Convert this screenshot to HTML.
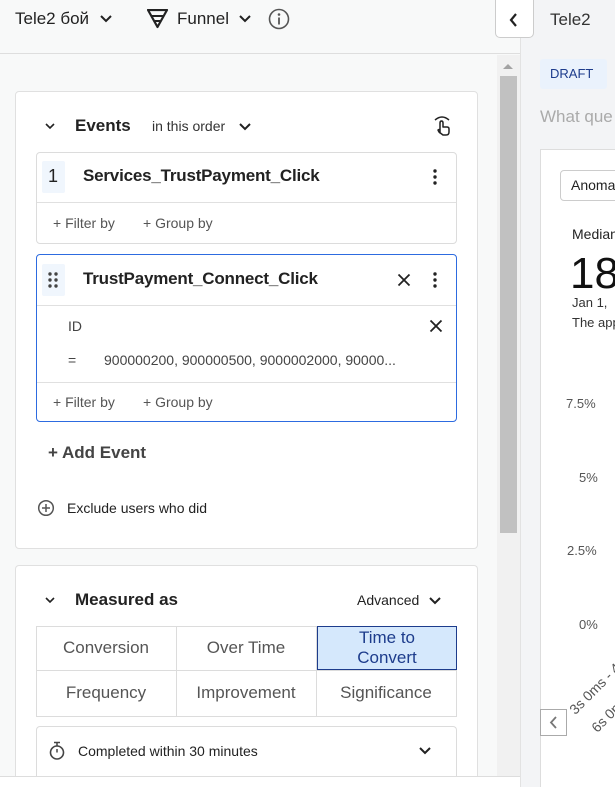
<!DOCTYPE html>
<html style="width:615px;height:787px;overflow:hidden"><head><meta charset="utf-8"><style>
*{box-sizing:border-box;margin:0;padding:0}
body{width:615px;height:787px;overflow:hidden;background:#f8f9f9;font-family:"Liberation Sans","DejaVu Sans",sans-serif;color:#1a1a1a;position:relative}
.a{position:absolute}
.t{position:absolute;white-space:nowrap}
.card{position:absolute;background:#fff;border:1px solid #e0e0e0;border-radius:4px}
.box{position:absolute;background:#fff;border:1px solid #dcdcdc;border-radius:4px}
.g{color:#555;font-size:14px}
</style></head><body>
<div class="a" style="left:0;top:0;width:520px;height:54px;border-bottom:1px solid #dedede;background:#f8f9f9"></div>
<div class="t" style="left:15px;top:9px;font-size:17px;color:#222">Tele2 бой</div>
<svg class="a" style="left:99px;top:14px" width="14" height="10"><path d="M2 2l5 5 5-5" stroke="#222" stroke-width="2" fill="none"/></svg>
<svg class="a" style="left:147px;top:9px" width="22" height="20"><path d="M1 1h19l-9.5 17z" stroke="#222" stroke-width="2.2" fill="none" stroke-linejoin="round"/><path d="M5 7h11M8 12h5" stroke="#222" stroke-width="2"/></svg>
<div class="t" style="left:177px;top:9px;font-size:17px;color:#222">Funnel</div>
<svg class="a" style="left:238px;top:14px" width="14" height="10"><path d="M2 2l5 5 5-5" stroke="#222" stroke-width="2" fill="none"/></svg>
<svg class="a" style="left:268px;top:8px" width="22" height="22"><circle cx="11" cy="11" r="9.5" stroke="#555" stroke-width="1.6" fill="none"/><circle cx="11" cy="6.5" r="1.3" fill="#555"/><path d="M11 9.5v7" stroke="#555" stroke-width="1.8"/></svg>
<div class="a" style="left:497px;top:55px;width:23px;height:721px;background:#f1f1f1"></div>
<svg class="a" style="left:503px;top:63px" width="10" height="6"><path d="M0 6l5-5 5 5z" fill="#a3a3a3"/></svg>
<div class="a" style="left:500px;top:76px;width:17px;height:457px;background:#c1c1c1"></div>
<div class="a" style="left:520px;top:0;width:95px;height:787px;background:#f3f4f6;border-left:1px solid #e2e2e2"></div>
<div class="a" style="left:495px;top:-2px;width:39px;height:40px;background:#fff;border:1px solid #ccc;border-radius:0 0 5px 5px"></div>
<svg class="a" style="left:509px;top:13px" width="10" height="14"><path d="M7 1L2 7l5 6" stroke="#222" stroke-width="2.2" fill="none"/></svg>
<div class="t" style="left:550px;top:10px;font-size:17px;color:#333">Tele2</div>
<div class="a" style="left:540px;top:59px;width:67px;height:30px;background:#eaf2fc;border-radius:3px"></div>
<div class="t" style="left:550px;top:66px;font-size:13px;color:#1d3c8c">DRAFT</div>
<div class="t" style="left:540px;top:107px;font-size:17px;color:#aaa">What que</div>
<div class="a" style="left:540px;top:149px;width:80px;height:640px;background:#fff;border-left:1px solid #ddd;border-top:1px solid #ddd"></div>
<div class="a" style="left:560px;top:170px;width:70px;height:31px;border:1px solid #ccc;border-radius:4px;background:#fff"></div>
<div class="t" style="left:571px;top:177px;font-size:14px;color:#222">Anomaly</div>
<div class="t" style="left:572px;top:226px;font-size:14px;color:#222">Median</div>
<div class="t" style="left:570px;top:249px;font-size:44px;color:#111">18</div>
<div class="t" style="left:572px;top:295px;font-size:13px;color:#333">Jan 1,</div>
<div class="t" style="left:572px;top:315px;font-size:13px;color:#333">The app</div>
<div class="t" style="left:566px;top:396px;font-size:13px;color:#555">7.5%</div>
<div class="t" style="left:579px;top:470px;font-size:13px;color:#555">5%</div>
<div class="t" style="left:567px;top:543px;font-size:13px;color:#555">2.5%</div>
<div class="t" style="left:579px;top:617px;font-size:13px;color:#555">0%</div>
<div class="t" style="left:566px;top:706px;font-size:14px;color:#555;transform:rotate(-45deg);transform-origin:0 0">3s 0ms - 4</div>
<div class="t" style="left:588px;top:724px;font-size:14px;color:#555;transform:rotate(-45deg);transform-origin:0 0">6s 0ms</div>
<div class="a" style="left:540px;top:709px;width:27px;height:27px;background:#fff;border:1px solid #aaa"></div>
<svg class="a" style="left:549px;top:716px" width="10" height="13"><path d="M7 1L2 6.5 7 12" stroke="#777" stroke-width="1.8" fill="none"/></svg>
<div class="card" style="left:15px;top:91px;width:463px;height:458px"></div>
<svg class="a" style="left:44px;top:122px" width="12" height="8"><path d="M2 2l4 4 4-4" stroke="#222" stroke-width="1.6" fill="none"/></svg>
<div class="t" style="left:75px;top:116px;font-size:17px;font-weight:bold;color:#222">Events</div>
<div class="t" style="left:152px;top:118px;font-size:14px;color:#333">in this order</div>
<svg class="a" style="left:238px;top:122px" width="14" height="10"><path d="M2 2l5 5 5-5" stroke="#222" stroke-width="2" fill="none"/></svg>
<svg class="a" style="left:432px;top:115px" width="20" height="22"><path d="M3 5q7-6 14 0" stroke="#222" stroke-width="1.5" fill="none"/><path d="M8 18V8q0-2 1.5-2T11 8v4h4q2 0 2 2v3q0 3-3 3h-3l-4-3-1-2q1-1 2 0z" stroke="#222" stroke-width="1.5" fill="none" stroke-linejoin="round"/></svg>
<div class="box" style="left:36px;top:152px;width:421px;height:92px"></div>
<div class="a" style="left:37px;top:202px;width:419px;height:1px;background:#e0e0e0"></div>
<div class="a" style="left:42px;top:161px;width:23px;height:32px;background:#f0f6fd;border-radius:2px"></div>
<div class="t" style="left:48px;top:166px;font-size:18px;color:#222">1</div>
<div class="t" style="left:83px;top:166px;font-size:17px;font-weight:bold;color:#222;letter-spacing:-.2px">Services_TrustPayment_Click</div>
<svg class="a" style="left:432px;top:168px" width="6" height="18"><circle cx="3" cy="3" r="1.7" fill="#222"/><circle cx="3" cy="9" r="1.7" fill="#222"/><circle cx="3" cy="15" r="1.7" fill="#222"/></svg>
<div class="t g" style="left:53px;top:215px">+ Filter by</div>
<div class="t g" style="left:143px;top:215px">+ Group by</div>
<div class="box" style="left:36px;top:254px;width:421px;height:168px;border-color:#2d6be0"></div>
<div class="a" style="left:37px;top:305px;width:419px;height:1px;background:#e0e0e0"></div>
<div class="a" style="left:37px;top:382px;width:419px;height:1px;background:#e0e0e0"></div>
<div class="a" style="left:42px;top:264px;width:23px;height:32px;background:#f0f6fd;border-radius:2px"></div>
<svg class="a" style="left:47px;top:271px" width="14" height="18"><g fill="#444"><circle cx="3" cy="3" r="1.7"/><circle cx="9" cy="3" r="1.7"/><circle cx="3" cy="9" r="1.7"/><circle cx="9" cy="9" r="1.7"/><circle cx="3" cy="15" r="1.7"/><circle cx="9" cy="15" r="1.7"/></g></svg>
<div class="t" style="left:83px;top:269px;font-size:17px;font-weight:bold;color:#222;letter-spacing:-.2px">TrustPayment_Connect_Click</div>
<svg class="a" style="left:397px;top:273px" width="14" height="14"><path d="M1.5 1.5l11 11M12.5 1.5l-11 11" stroke="#222" stroke-width="1.8"/></svg>
<svg class="a" style="left:432px;top:271px" width="6" height="18"><circle cx="3" cy="3" r="1.7" fill="#222"/><circle cx="3" cy="9" r="1.7" fill="#222"/><circle cx="3" cy="15" r="1.7" fill="#222"/></svg>
<div class="t" style="left:68px;top:318px;font-size:14px;color:#444">ID</div>
<svg class="a" style="left:429px;top:319px" width="14" height="14"><path d="M1.5 1.5l11 11M12.5 1.5l-11 11" stroke="#222" stroke-width="1.8"/></svg>
<div class="t" style="left:68px;top:352px;font-size:14px;color:#444">=</div>
<div class="t" style="left:104px;top:352px;font-size:14px;color:#444">900000200, 900000500, 9000002000, 90000...</div>
<div class="t g" style="left:53px;top:394px">+ Filter by</div>
<div class="t g" style="left:143px;top:394px">+ Group by</div>
<div class="t" style="left:48px;top:443px;font-size:17px;font-weight:bold;color:#444">+ Add Event</div>
<svg class="a" style="left:37px;top:499px" width="18" height="18"><circle cx="9" cy="9" r="7.3" stroke="#555" stroke-width="1.5" fill="none"/><path d="M9 5v8M5 9h8" stroke="#555" stroke-width="1.5"/></svg>
<div class="t" style="left:67px;top:500px;font-size:14px;color:#222">Exclude users who did</div>
<div class="card" style="left:15px;top:565px;width:463px;height:222px;border-bottom:none;border-radius:4px 4px 0 0"></div>
<svg class="a" style="left:44px;top:596px" width="12" height="8"><path d="M2 2l4 4 4-4" stroke="#222" stroke-width="1.6" fill="none"/></svg>
<div class="t" style="left:75px;top:590px;font-size:17px;font-weight:bold;color:#222">Measured as</div>
<div class="t" style="left:357px;top:592px;font-size:14px;color:#222">Advanced</div>
<svg class="a" style="left:428px;top:596px" width="14" height="10"><path d="M2 2l5 5 5-5" stroke="#222" stroke-width="2" fill="none"/></svg>
<div class="a" style="left:36px;top:626px;width:421px;height:91px;border:1px solid #dcdcdc"></div>
<div class="a" style="left:176px;top:626px;width:1px;height:91px;background:#dcdcdc"></div>
<div class="a" style="left:316px;top:626px;width:1px;height:91px;background:#dcdcdc"></div>
<div class="a" style="left:36px;top:670px;width:421px;height:1px;background:#dcdcdc"></div>
<div class="a" style="left:317px;top:626px;width:140px;height:44px;background:#d5e8fc;border:1px solid #1d3c8c"></div>
<div class="t" style="left:36px;top:638px;width:140px;text-align:center;font-size:17px;color:#555">Conversion</div>
<div class="t" style="left:176px;top:638px;width:140px;text-align:center;font-size:17px;color:#555">Over Time</div>
<div class="t" style="left:317px;top:628px;width:140px;text-align:center;font-size:17px;line-height:20px;color:#1d3c8c;white-space:normal">Time to<br>Convert</div>
<div class="t" style="left:36px;top:683px;width:140px;text-align:center;font-size:17px;color:#555">Frequency</div>
<div class="t" style="left:176px;top:683px;width:140px;text-align:center;font-size:17px;color:#555">Improvement</div>
<div class="t" style="left:316px;top:683px;width:140px;text-align:center;font-size:17px;color:#555">Significance</div>
<div class="box" style="left:36px;top:726px;width:421px;height:61px;border-bottom:none;border-radius:4px 4px 0 0"></div>
<svg class="a" style="left:48px;top:741px" width="18" height="20"><path d="M6 1.5h6M9 1.5v3" stroke="#444" stroke-width="1.5"/><circle cx="9" cy="11.5" r="6.5" stroke="#444" stroke-width="1.6" fill="none"/><path d="M9 11.5V8" stroke="#444" stroke-width="1.5"/></svg>
<div class="t" style="left:78px;top:743px;font-size:14px;color:#222">Completed within 30 minutes</div>
<svg class="a" style="left:418px;top:746px" width="14" height="10"><path d="M2 2l5 5 5-5" stroke="#222" stroke-width="2" fill="none"/></svg>
<div class="a" style="left:0;top:776px;width:520px;height:11px;background:#fff;border-top:1px solid #ddd"></div>
</body></html>
